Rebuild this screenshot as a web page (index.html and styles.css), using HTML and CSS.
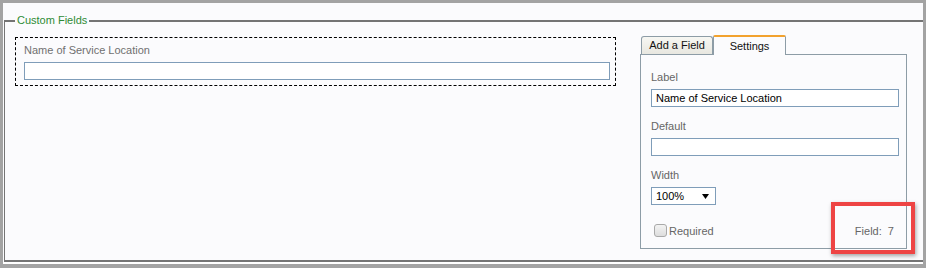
FILE: index.html
```html
<!DOCTYPE html>
<html lang="en">

<head>
  <meta charset="UTF-8">
  <title>Custom Fields</title>
  <link rel="stylesheet" href="styles.css">
</head>

<body>
  <div class="frame">
    <fieldset class="group">
      <legend>Custom Fields</legend>
      <div class="layout">
        <!-- preview of the form as it will look -->
        <div class="preview">
          <div class="preview-label">Name of Service Location</div>
          <input class="text-input" type="text">
        </div>

        <!-- field editor -->
        <div class="editor">
          <div class="tabs">
            <span class="tab">Add a Field</span>
            <span class="tab tab-active">Settings</span>
          </div>
          <div class="panel">
            <div class="field">
              <div class="field-label">Label</div>
              <input class="text-input" type="text" value="Name of Service Location">
            </div>
            <div class="field">
              <div class="field-label">Default</div>
              <input class="text-input" type="text">
            </div>
            <div class="field">
              <div class="field-label">Width</div>
              <div class="select">
                <span>100%</span>
                <svg width="7" height="5" viewBox="0 0 7 5"><path d="M0 0H7L3.5 5Z" fill="#000"/></svg>
              </div>
            </div>
            <div class="panel-footer">
              <label class="check"><span class="checkbox"></span>Required</label>
              <span class="field-id">Field:&nbsp; 7</span>
            </div>
            <div class="highlight"></div>
          </div>
        </div>
      </div>
    </fieldset>
  </div>
</body>

</html>
```

FILE: styles.css
```css
body {
  margin: 0;
  background: #a3a3a3;
  font-family: "Liberation Sans", Arial, sans-serif;
  font-size: 11px;
  color: #222;
}

.frame {
  margin: 3px 3px 0 3px;
  height: 261px;
  box-sizing: border-box;
  padding: 11px 0 0 1px;
  background: #fbfbfd;
  border-bottom: 2px solid #fff;
  display: flex;
  flex-direction: column;
}

.group {
  flex: 1;
  min-width: 0;
  margin: 0;
  padding: 8px 15px 0 10px;
  border: 0;
  border-top: 2px solid #747474;
  border-left: 1px solid #747474;
  border-bottom: 2px solid #747474;
}

.group legend {
  padding: 0 2px;
  line-height: 13px;
  color: #2e8b35;
}

.layout {
  display: flex;
  align-items: flex-start;
  gap: 24px;
}

.preview {
  width: 601px;
  box-sizing: border-box;
  margin-top: 2px;
  padding: 6px 5px 5px 8px;
  border: 1px dashed #000;
}

.preview-label {
  line-height: 13px;
  margin-bottom: 5px;
  color: #707070;
}

.text-input {
  display: block;
  width: 100%;
  height: 18px;
  box-sizing: border-box;
  margin: 0;
  padding: 0 4px;
  border: 1px solid #7f9db9;
  background: #fff;
  font-family: inherit;
  font-size: 11px;
  color: #000;
}

.editor {
  width: 267px;
}

.tabs {
  display: flex;
  align-items: flex-end;
  height: 20px;
}

.tab {
  position: relative;
  box-sizing: border-box;
  margin: 0 0 1px 1px;
  width: 72px;
  height: 18px;
  line-height: 17px;
  text-align: center;
  border: 1px solid #8d9ca6;
  border-bottom: none;
  border-radius: 3px 3px 0 0;
  background: linear-gradient(#f7f7f3, #e8e7e0);
  color: #111;
}

.tab-active {
  z-index: 1;
  width: 73px;
  height: 20px;
  margin: 0;
  line-height: 18px;
  border-top: 2px solid #f2a22e;
  border-radius: 2px 2px 0 0;
  background: #fbfbfd;
}

.panel {
  position: relative;
  margin-top: -1px;
  padding: 16px 7px 11px 10px;
  border: 1px solid #8d9ca6;
}

.field {
  margin-bottom: 13px;
}

.field-label {
  line-height: 13px;
  margin-bottom: 5px;
  color: #666;
}

.select {
  display: flex;
  align-items: center;
  justify-content: space-between;
  width: 65px;
  height: 18px;
  box-sizing: border-box;
  padding: 0 6px 0 4px;
  border: 1px solid #7f9db9;
  background: #fff;
  color: #000;
}

.panel-footer {
  display: flex;
  align-items: center;
  justify-content: space-between;
  margin-top: 19px;
  height: 13px;
  color: #666;
}

.check {
  display: flex;
  align-items: center;
  margin-left: 3px;
}

.checkbox {
  width: 13px;
  height: 13px;
  box-sizing: border-box;
  margin-right: 2px;
  border: 1px solid #a9a9a9;
  border-radius: 3px;
  background: linear-gradient(#f3f3f3, #dddddd);
}

.field-id {
  margin-right: 5px;
}

/* red annotation box round the field number */
.highlight {
  position: absolute;
  left: 190px;
  top: 147px;
  width: 84px;
  height: 52px;
  box-sizing: border-box;
  border: 4px solid #ee4444;
  box-shadow: 1px 2px 4px rgba(0, 0, 0, 0.35);
}
```
